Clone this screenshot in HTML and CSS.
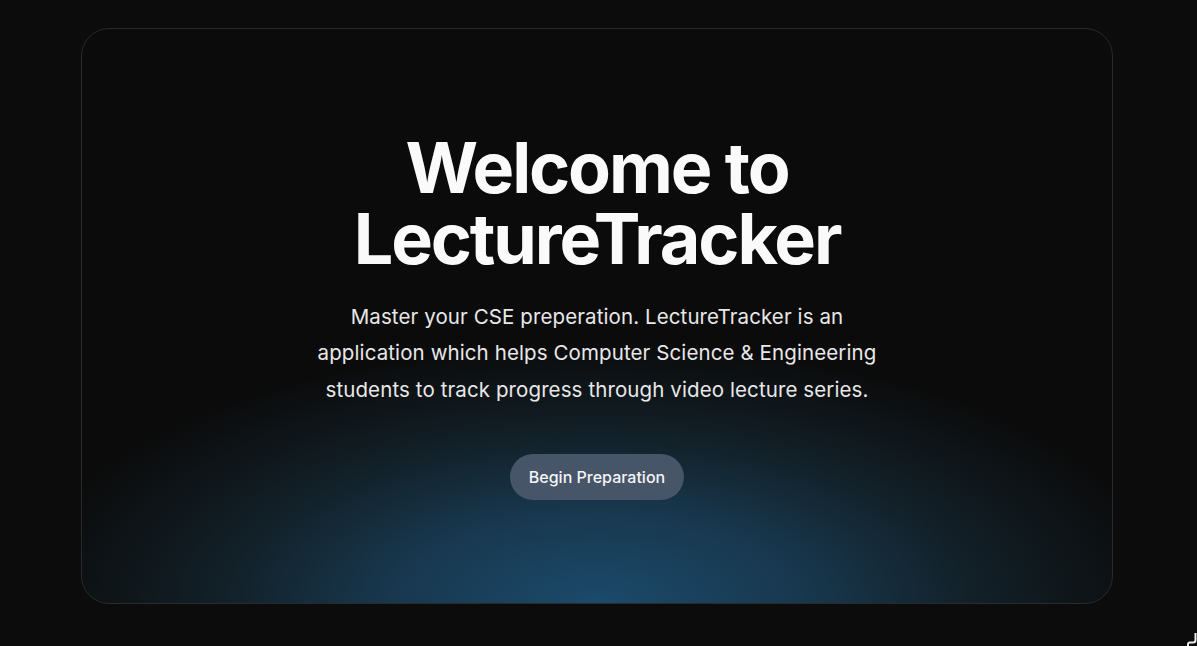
FILE: index.html
```html
<!DOCTYPE html>
<html lang="en">
<head>
<meta charset="utf-8">
<title>LectureTracker</title>
<link rel="stylesheet" href="styles.css">
</head>
<body>
<main class="page">
  <section class="hero">
    <div class="hero-content">
      <h1 class="title">Welcome to<br>LectureTracker</h1>
      <p class="lead">Master your CSE preperation. LectureTracker is an application which helps Computer Science &amp; Engineering students to track progress through video lecture series.</p>
      <a class="cta" href="#">Begin Preparation</a>
    </div>
  </section>
</main>
<div class="corner-widget">
  <svg width="13" height="16" viewBox="0 0 13 16"><path d="M11.5 3 V10 Q11.5 12.5 9 12.5 H6 Q4 12.5 4 14.5 V16" fill="none" stroke="#f0f0f0" stroke-width="2"/></svg>
</div>
</body>
</html>
```

FILE: styles.css
```css
* { box-sizing: border-box; }
html, body {
  margin: 0;
  padding: 0;
  background: #0c0c0c;
  height: 100%;
}
body {
  font-family: Inter, "Noto Sans", sans-serif;
  color: #fafafa;
  overflow: hidden;
}
.page {
  padding: 28px 0 0 81px;
}
.hero {
  width: 1032px;
  height: 576px;
  border: 1px solid #2a2a2a;
  border-radius: 28px;
  background-color: #0b0b0b;
  background-image: radial-gradient(ellipse 580px 260px at 50% 100%, #1b4a6b 0%, #18384f 35%, #122028 65%, rgba(11,11,11,0) 100%);
  display: flex;
  align-items: center;
  justify-content: center;
  overflow: hidden;
}
.hero-content {
  display: flex;
  flex-direction: column;
  align-items: center;
  text-align: center;
}
.title {
  margin: 0;
  font-size: 70px;
  line-height: 71px;
  font-weight: 700;
  letter-spacing: -0.03em;
  color: #fafafa;
}
.lead {
  margin: 25px 0 0;
  max-width: 580px;
  font-size: 20.5px;
  line-height: 36.5px;
  letter-spacing: 0.005em;
  color: #e8e8e8;
}
.cta {
  margin-top: 46px;
  display: inline-block;
  padding: 11px 19px;
  border-radius: 999px;
  background: #475569;
  color: #f4f4f5;
  font-size: 16px;
  line-height: 24px;
  font-weight: 500;
  text-decoration: none;
}
.corner-widget {
  position: fixed;
  left: 1184px;
  top: 630px;
  width: 13px;
  height: 16px;
}
```
